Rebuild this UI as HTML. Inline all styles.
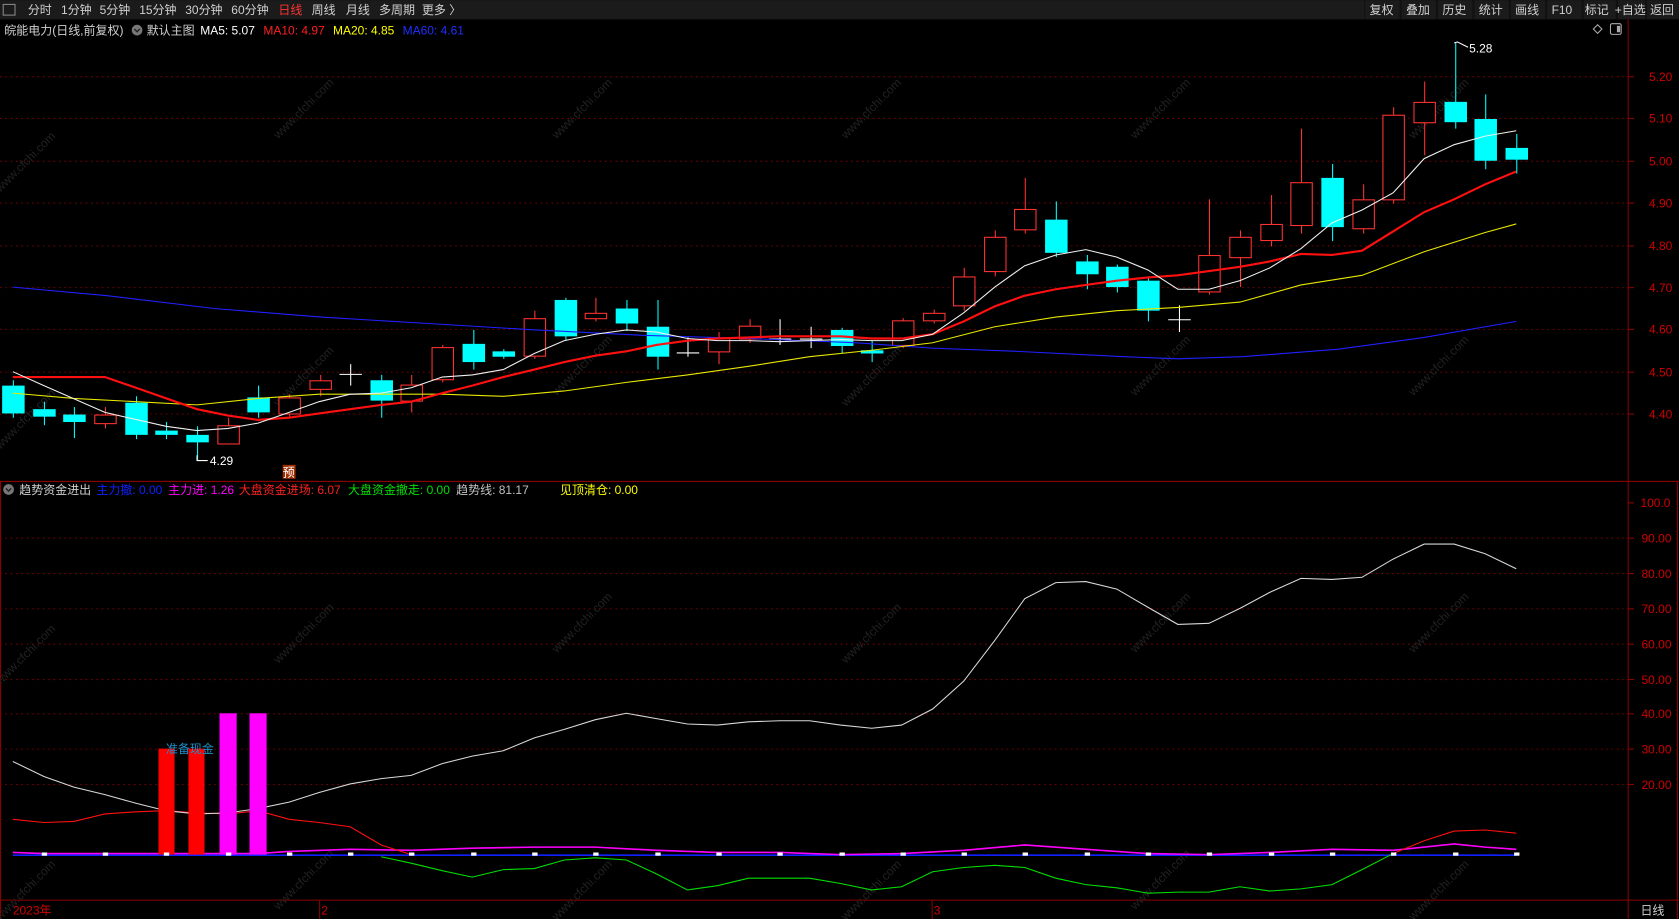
<!DOCTYPE html>
<html><head><meta charset="utf-8"><style>
html,body{margin:0;padding:0;background:#000;overflow:hidden}
svg{display:block}
text{font-family:"Liberation Sans","Noto Sans CJK SC",sans-serif;font-size:11.2px}
</style></head><body>
<svg id="s" width="1679" height="919" viewBox="0 0 1568 858" xmlns="http://www.w3.org/2000/svg">
<rect width="1568" height="858" fill="#000"/>
<rect x="0" y="0" width="1568" height="18" fill="#1b1b1b"/>
<rect x="3" y="4" width="11" height="10" fill="none" stroke="#888" stroke-width="1"/>
<g fill="#d0d0d0">
<text x="26" y="13">分时</text><text x="57" y="13">1分钟</text><text x="93" y="13">5分钟</text><text x="130" y="13">15分钟</text><text x="173" y="13">30分钟</text><text x="216" y="13">60分钟</text>
<text x="260" y="13" fill="#ff3333">日线</text><text x="291" y="13">周线</text><text x="323" y="13">月线</text><text x="354" y="13">多周期</text><text x="394" y="13">更多 〉</text>
</g>
<g fill="#111"><rect x="1274" y="0" width="1" height="18"/><rect x="1307" y="0" width="2" height="18"/><rect x="1341" y="0" width="2" height="18"/><rect x="1375" y="0" width="2" height="18"/><rect x="1409" y="0" width="2" height="18"/><rect x="1443" y="0" width="2" height="18"/><rect x="1477" y="0" width="2" height="18"/><rect x="1509" y="0" width="2" height="18"/><rect x="1536" y="0" width="2" height="18"/></g>
<g fill="#d0d0d0">
<text x="1279" y="13">复权</text><text x="1313" y="13">叠加</text><text x="1347" y="13">历史</text><text x="1381" y="13">统计</text><text x="1415" y="13">画线</text><text x="1449" y="13">F10</text><text x="1480" y="13">标记</text><text x="1508" y="13" font-size="10.8">+自选</text><text x="1541" y="13">返回</text>
</g>
<text x="4" y="32" fill="#d0d0d0">皖能电力(日线,前复权)</text>
<circle cx="128" cy="28" r="5" fill="#777"/><path d="M125.5 27l2.5 2.5 2.5-2.5" stroke="#222" fill="none" stroke-width="1.3"/>
<text x="137" y="32" fill="#d0d0d0">默认主图</text>
<text x="187" y="32" fill="#fff">MA5: 5.07</text>
<text x="246" y="32" fill="#ff2020">MA10: 4.97</text>
<text x="311" y="32" fill="#ffff00">MA20: 4.85</text>
<text x="376" y="32" fill="#2030ff">MA60: 4.61</text>
<path d="M1492 23l4 4-4 4-4-4z" fill="none" stroke="#aaa"/>
<rect x="1504" y="22" width="10" height="10" rx="1.5" fill="none" stroke="#aaa"/><rect x="1510" y="24" width="3" height="6" fill="#aaa"/>
<g stroke="#8b0000" fill="none">
<line x1="1520.5" y1="18" x2="1520.5" y2="858"/>
<line x1="0" y1="449.5" x2="1568" y2="449.5"/>
<line x1="0" y1="840.5" x2="1568" y2="840.5"/>
<line x1="0.5" y1="449" x2="0.5" y2="858"/>
<line x1="1566.5" y1="449" x2="1566.5" y2="858"/>
</g>
<g id="grid" stroke="#7a0000" stroke-dasharray="1.5 3.5"></g>
<g id="labels" fill="#d00000"></g>
<g id="wm" fill="#222" font-size="22"></g>
<g id="cand"></g>
<g id="ma" fill="none" stroke-width="1"></g>
<text x="1372" y="49" fill="#fff">5.28</text>
<path d="M1358 40l3-1 10 5" stroke="#fff" fill="none"/>
<text x="196" y="434" fill="#fff">4.29</text>
<path d="M184 425v5h10" stroke="#fff" fill="none"/>
<rect x="264" y="434" width="12" height="13" fill="#a03000"/><text x="264" y="445" fill="#fff" font-size="11">预</text>
<circle cx="8" cy="457" r="5" fill="#777"/><path d="M5.5 456l2.5 2.5 2.5-2.5" stroke="#222" fill="none" stroke-width="1.3"/>
<text x="18" y="461" fill="#d0d0d0">趋势资金进出</text>
<text x="90" y="461" fill="#1020ff">主力撤: 0.00</text>
<text x="157" y="461" fill="#ff00ff">主力进: 1.26</text>
<text x="223" y="461" fill="#ff2020">大盘资金进场: 6.07</text>
<text x="325" y="461" fill="#00e000">大盘资金撤走: 0.00</text>
<text x="426" y="461" fill="#c0c0c0">趋势线: 81.17</text>
<text x="523" y="461" fill="#ffff00">见顶清仓: 0.00</text>
<g id="ind"></g>
<text x="155" y="703" fill="#1e8fc8">准备现金</text>
<text x="12" y="854" fill="#d00000">2023年</text>
<line x1="298.5" y1="841" x2="298.5" y2="858" stroke="#8b0000"/><text x="300" y="854" fill="#d00000">2</text>
<line x1="870.5" y1="841" x2="870.5" y2="858" stroke="#8b0000"/><text x="872" y="854" fill="#d00000">3</text>
<text x="1532" y="854" fill="#d0d0d0">日线</text>
</svg>
<script>
var NS="http://www.w3.org/2000/svg";
function el(p,t,a,txt){var e=document.createElementNS(NS,t);for(var k in a)e.setAttribute(k,a[k]);if(txt)e.textContent=txt;document.getElementById(p).appendChild(e);return e;}
var py=function(p){return 71+(5.20-p)*394;};
var pv=[5.20,5.10,5.00,4.90,4.80,4.70,4.60,4.50,4.40];
pv.forEach(function(p){var y=Math.round(py(p))+.5;el('grid','line',{x1:0,y1:y,x2:1520,y2:y});el('labels','line',{x1:1520,y1:y,x2:1526,y2:y,stroke:'#8b0000'});el('labels','text',{x:1540,y:y+4},p.toFixed(2));});
var iy=function(v){return 469+(100-v)*3.29;};
for(var v=100;v>=20;v-=10){var y=Math.round(iy(v))+.5;if(v<100)el('grid','line',{x1:0,y1:y,x2:1520,y2:y});el('labels','line',{x1:1520,y1:y,x2:1526,y2:y,stroke:'#8b0000'});el('labels','text',{x:v==100?1532:1533,y:y+4},v==100?'100.0':v.toFixed(2));}
[[0,180],[260,130],[520,130],[790,130],[1060,130],[1320,130],[0,420],[260,380],[520,370],[790,380],[1060,370],[1320,370],[0,640],[260,620],[520,610],[790,620],[1060,610],[1320,610],[0,860],[260,850],[520,860],[790,860],[1060,850],[1320,860]].forEach(function(a){el('wm','text',{x:a[0],y:a[1],transform:'rotate(-45 '+a[0]+' '+a[1]+')'},'www.cfchi.com');});
var C=[['c',360,386,355,390],['c',382,389,375,397],['c',387,394,380,409],['r',387,395,380,400],['c',376,406,370,410],['c',402,406,394,410],['c',406,413,398,430],['r',397,414,390,415],['c',371,385,360,390],['r',371,386,368,390],['r',355,363,350,370],['w',349,349,340,360],['c',355,374,350,390],['r',359,374,350,385],['r',324,354,322,357],['c',321,338,308,345],['c',328,333,326,335],['r',297,332,290,335],['c',280,314,278,318],['r',292,297,278,300],['c',288,302,280,309],['c',305,333,280,345],['w',329,329,315,333],['r',315,328,310,340],['r',304,316,298,320],['w',316,316,298,322],['w',316,316,305,325],['c',308,323,306,330],['c',327,330,318,338],['r',299,322,297,325],['r',292,299,289,302],['r',258,285,250,290],['r',221,253,215,258],['r',195,214,166,218],['c',205,236,188,240],['c',244,256,238,270],['c',249,268,247,273],['c',262,290,258,300],['w',298,298,285,310],['r',238,272,186,275],['r',221,240,215,268],['r',209,224,182,230],['r',170,210,120,218],['c',166,212,153,225],['r',186,213,172,218],['r',107,186,100,190],['r',95,114,76,145],['c',95,114,40,120],['c',111,150,88,158],['c',138,149,125,162]];
C.forEach(function(c,i){var x=Math.round(12+i*28.65);var col=c[0]=='c'?'#00ffff':c[0]=='r'?'#ff3232':'#ffffff';
el('cand','line',{x1:x+.5,y1:c[3],x2:x+.5,y2:c[4],stroke:col});
if(c[0]=='c')el('cand','rect',{x:x-10,y:c[1],width:21,height:Math.max(2,c[2]-c[1]),fill:col});
else if(c[0]=='r')el('cand','rect',{x:x-9.5,y:c[1]+.5,width:20,height:c[2]-c[1],fill:'#000',stroke:col});
else el('cand','line',{x1:x-10,y1:c[1]+.5,x2:x+11,y2:c[1]+.5,stroke:col});});
function pl(g,pts,col,w){el(g,'polyline',{points:pts.map(function(p){return p.join(',');}).join(' '),stroke:col,'stroke-width':w||1,fill:'none'});}
pl('ma',[[12,268],[100,276],[200,288],[300,296],[400,302],[500,308],[600,313],[700,316],[800,320],[870,325],[950,328],[1050,333],[1100,335],[1160,333],[1250,326],[1330,315],[1416,300]],'#2020ff');
pl('ma',[[12,367],[69,372],[127,375],[184,378],[241,372],[298,368],[356,368],[413,368],[470,370],[527,365],[585,357],[642,350],[699,342],[756,333],[814,327],[871,320],[929,305],[986,296],[1043,290],[1100,287],[1158,282],[1215,266],[1272,257],[1330,235],[1387,217],[1416,209]],'#e8e800');
pl('ma',[[12,352],[41,352],[98,352],[127,362],[184,382],[213,388],[241,392],[270,390],[298,386],[356,378],[384,375],[413,367],[441,360],[470,352],[499,345],[527,338],[556,332],[585,328],[613,322],[642,318],[670,316],[699,315],[728,314],[756,314],[785,314],[814,316],[842,316],[871,312],[900,300],[929,286],[957,276],[986,270],[1014,266],[1043,262],[1072,259],[1100,257],[1129,253],[1158,249],[1186,244],[1215,237],[1244,238],[1272,234],[1301,216],[1330,198],[1358,186],[1387,172],[1416,160]],'#ff1010',2);
pl('ma',[[12,347],[41,360],[98,385],[155,398],[184,402],[213,400],[241,395],[270,385],[298,375],[327,368],[356,367],[384,362],[413,352],[441,350],[470,345],[499,330],[527,318],[556,312],[585,308],[613,310],[642,316],[670,318],[699,318],[728,319],[756,318],[785,317],[814,318],[842,318],[871,312],[900,292],[929,268],[957,248],[986,238],[1014,233],[1043,240],[1072,252],[1100,270],[1129,270],[1158,262],[1186,250],[1215,232],[1244,208],[1272,196],[1301,180],[1330,148],[1358,135],[1387,127],[1416,122]],'#f0f0f0');
pl('ind',[[12,798.5],[1416,798.5]],'#1020ff',1.5);
pl('ind',[[12,796],[41,797],[241,797],[270,795],[327,793],[384,794],[441,792],[499,791],[556,791],[613,794],[670,796],[728,796],[785,798],[842,797],[900,794],[957,789],[1014,793],[1072,797],[1129,798],[1186,796],[1244,793],[1301,794],[1358,788],[1387,791],[1416,793]],'#ff00ff',1.5);
pl('ind',[[356,800],[384,806],[413,813],[441,819],[470,812],[499,811],[527,803],[556,801],[585,803],[613,816],[642,831],[670,827],[699,820],[728,820],[756,820],[785,825],[814,831],[842,828],[871,814],[900,810],[929,808],[957,810],[986,820],[1014,826],[1043,829],[1072,834],[1100,833],[1129,833],[1158,828],[1186,832],[1215,830],[1244,826],[1272,812],[1301,797]],'#00e000',1);
pl('ind',[[12,765],[41,768],[69,767],[98,760],[127,758],[155,757],[184,759],[213,760],[241,757],[270,765],[298,768],[327,772],[356,789],[384,798]],'#ff1010',1);
pl('ind',[[1301,797],[1330,785],[1358,776],[1387,775],[1416,778]],'#ff1010',1);
pl('ind',[[12,711],[41,725],[69,735],[98,742],[127,750],[155,757],[184,760],[213,759],[241,755],[270,749],[298,740],[327,732],[356,727],[384,724],[413,713],[441,706],[470,701],[499,689],[527,681],[556,672],[585,666],[613,671],[642,676],[670,677],[699,674],[728,673],[756,673],[785,677],[814,680],[842,677],[871,662],[900,636],[929,598],[957,559],[986,544],[1014,543],[1043,550],[1072,567],[1100,583],[1129,582],[1158,568],[1186,553],[1215,540],[1244,541],[1272,539],[1301,522],[1330,508],[1358,508],[1387,517],[1416,531]],'#d8d8d8',1);
el('ind','rect',{x:148,y:699,width:15,height:99,fill:'#ff0000'});
el('ind','rect',{x:176,y:699,width:15,height:99,fill:'#ff0000'});
el('ind','rect',{x:205,y:666,width:16,height:132,fill:'#ff00ff'});
el('ind','rect',{x:233,y:666,width:16,height:132,fill:'#ff00ff'});
for(var i=1;i<50;i+=2){var x=Math.round(12+i*28.65);el('ind','rect',{x:x-2,y:796,width:5,height:3,fill:'#fff'});}
</script>
</body></html>
